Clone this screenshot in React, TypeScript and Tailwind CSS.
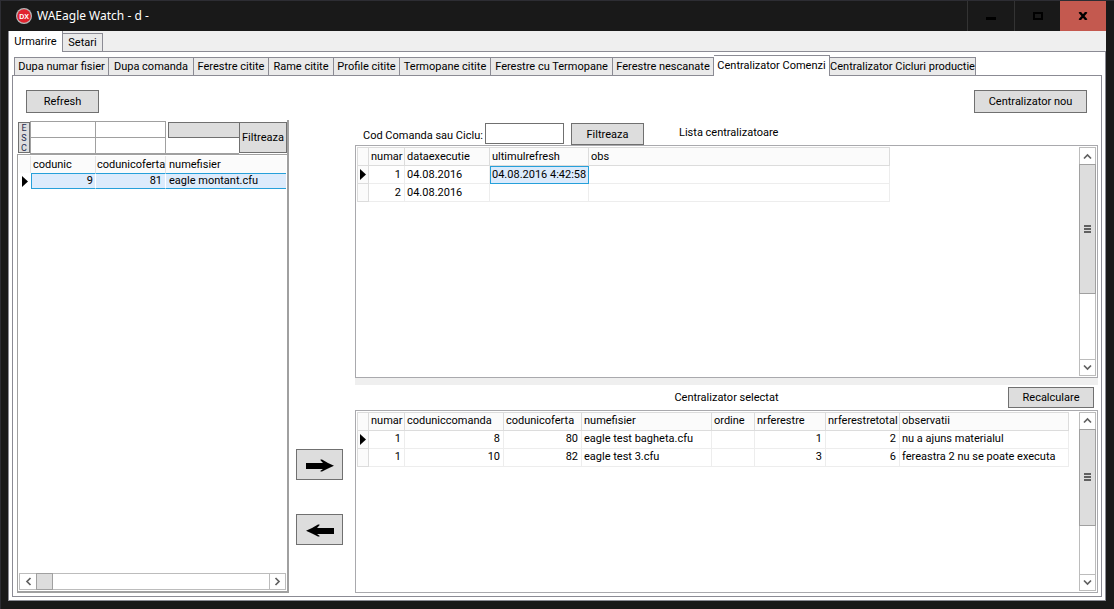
import clsx from "clsx";
import { ReactNode } from "react";

type Column = {
  name: string;
  width: string;
  align?: "right";
};

type GridProps = {
  label: string;
  columns: Column[];
  rows: string[][];
  selectedCell?: number;
};

const mainTabs = ["Urmarire", "Setari"];

const subTabs = [
  { name: "Dupa numar fisier", width: "w-[95px]" },
  { name: "Dupa comanda", width: "w-[85px]" },
  { name: "Ferestre citite", width: "w-[75px]" },
  { name: "Rame citite", width: "w-[65px]" },
  { name: "Profile citite", width: "w-[66px]" },
  { name: "Termopane citite", width: "w-[91px]" },
  { name: "Ferestre cu Termopane", width: "w-[122px]" },
  { name: "Ferestre nescanate", width: "w-[101px]" },
  { name: "Centralizator Comenzi", width: "w-[116px]" },
  { name: "Centralizator Cicluri productie", width: "w-[146px]" },
];

const listColumns: Column[] = [
  { name: "numar", width: "w-[36px]", align: "right" },
  { name: "dataexecutie", width: "w-[85px]" },
  { name: "ultimulrefresh", width: "w-[99px]" },
  { name: "obs", width: "w-[301px]" },
];

const listRows = [
  ["1", "04.08.2016", "04.08.2016 4:42:58", ""],
  ["2", "04.08.2016", "", ""],
];

const selectedColumns: Column[] = [
  { name: "numar", width: "w-[36px]", align: "right" },
  { name: "coduniccomanda", width: "w-[99px]", align: "right" },
  { name: "codunicoferta", width: "w-[78px]", align: "right" },
  { name: "numefisier", width: "w-[130px]" },
  { name: "ordine", width: "w-[43px]", align: "right" },
  { name: "nrferestre", width: "w-[71px]", align: "right" },
  { name: "nrferestretotal", width: "w-[74px]", align: "right" },
  { name: "observatii", width: "w-[169px]" },
];

const selectedRows = [
  ["1", "8", "80", "eagle test bagheta.cfu", "", "1", "2", "nu a ajuns materialul"],
  ["1", "10", "82", "eagle test 3.cfu", "", "3", "6", "fereastra 2 nu se poate executa"],
];

const Button = ({ className, children, label }: { className?: string; children: ReactNode; label?: string }) => (
  <button
    type="button"
    aria-label={label}
    className={clsx(
      "flex shrink-0 items-center justify-center border border-[#707070] bg-[#dddddd] pt-px whitespace-nowrap",
      className
    )}
  >
    {children}
  </button>
);

const Chevron = ({ direction }: { direction: "up" | "down" | "left" | "right" }) => (
  <svg
    width="9"
    height="9"
    viewBox="0 0 9 9"
    fill="none"
    stroke="#606060"
    strokeWidth="1.7"
    className={clsx(
      direction === "down" && "rotate-180",
      direction === "left" && "-rotate-90",
      direction === "right" && "rotate-90"
    )}
  >
    <path d="M1 6.5 4.5 3 8 6.5" />
  </svg>
);

const RowMarker = () => (
  <svg width="6" height="11" viewBox="0 0 6 11" className="mx-auto block">
    <path d="M0 0 6 5.5 0 11Z" fill="#000" />
  </svg>
);

const Arrow = ({ flip }: { flip?: boolean }) => (
  <svg width="28" height="13" viewBox="0 0 28 13" className={clsx(flip && "-scale-x-100")}>
    <path d="M0 4H17L14.5 1.2V.5H16L22 4 28 6.8 22 9.5 16 12.5H14.5V11.8L17 10H0Z" fill="#000" />
  </svg>
);

const VerticalScrollbar = ({ thumb }: { thumb: string }) => (
  <div className="flex w-[17px] shrink-0 flex-col border border-[#bcbcbc] bg-white">
    <button type="button" aria-label="Scroll up" className="flex h-4 items-center justify-center">
      <Chevron direction="up" />
    </button>
    <div className="-mx-px flex-1">
      <div className={clsx("flex flex-col items-center justify-center gap-px border border-[#a0a0a0] bg-[#dddddd]", thumb)}>
        <span className="h-[2px] w-[7px] bg-[#606060]" />
        <span className="h-[2px] w-[7px] bg-[#606060]" />
        <span className="h-[2px] w-[7px] bg-[#606060]" />
      </div>
    </div>
    <button
      type="button"
      aria-label="Scroll down"
      className="flex h-4 items-center justify-center border-t border-[#bcbcbc]"
    >
      <Chevron direction="down" />
    </button>
  </div>
);

const Grid = ({ label, columns, rows, selectedCell }: GridProps) => (
  <table aria-label={label} className="table-fixed border-separate border-spacing-0 border-t border-l border-[#dcdcdc]">
    <thead>
      <tr className="h-[18px] bg-[#fbfbfb]">
        <th aria-label="Row" className="w-[11px] border-r border-b border-[#dcdcdc] p-0" />
        {columns.map((column) => (
          <th
            key={column.name}
            className={clsx(
              "border-r border-b border-[#dcdcdc] p-0 pl-[2px] text-left font-normal whitespace-nowrap",
              column.width
            )}
          >
            {column.name}
          </th>
        ))}
      </tr>
    </thead>
    <tbody>
      {rows.map((row, rowIndex) => (
        <tr key={rowIndex} className="h-[18px]">
          <td className="border-r border-b border-[#dcdcdc] bg-[#fbfbfb] p-0">{rowIndex === 0 && <RowMarker />}</td>
          {row.map((value, index) => (
            <td
              key={index}
              className={clsx(
                "border-r border-b border-[#ededed] p-0 whitespace-nowrap",
                columns[index].align === "right" ? "pr-[3px] text-right" : "pl-[2px]",
                rowIndex === 0 && index === selectedCell && "bg-[#dcebfc] outline outline-1 -outline-offset-1 outline-[#26a0da]"
              )}
            >
              {value}
            </td>
          ))}
        </tr>
      ))}
    </tbody>
  </table>
);

const TitleBar = () => (
  <header className="flex h-[30px] shrink-0 items-stretch text-white">
    <div className="flex flex-1 items-center gap-[5px] pl-2">
      <svg width="16" height="16" viewBox="0 0 16 16">
        <circle cx="8" cy="8" r="8" fill="#b9b9b9" />
        <circle cx="8" cy="8" r="6.8" fill="#e0232e" />
        <text x="8" y="10.5" textAnchor="middle" fontSize="7" fontWeight="bold" fill="#fff" fontFamily="Liberation Sans">
          DX
        </text>
      </svg>
      <h1 className="font-['Noto_Sans',sans-serif] text-[12px]">WAEagle Watch - d -</h1>
    </div>
    <button type="button" aria-label="Minimize" className="flex w-[47px] items-center justify-center border-l border-[#333333]">
      <span className="mt-[4px] h-[3px] w-[10px] bg-black" />
    </button>
    <button type="button" aria-label="Maximize" className="flex w-[46px] items-center justify-center border-l border-[#333333]">
      <span className="h-[8px] w-[10px] border-2 border-black" />
    </button>
    <button type="button" aria-label="Close" className="flex w-[46px] items-center justify-center bg-[#c4594f]">
      <svg width="10" height="8" viewBox="0 0 10 8" stroke="#000" strokeWidth="2.4">
        <path d="M1.5 0 8.5 8M8.5 0 1.5 8" />
      </svg>
    </button>
  </header>
);

const FilesPanel = () => (
  <section className="flex w-[272px] shrink-0 flex-col border-r-2 border-[#a0a0a0] pt-px">
    <div className="flex h-[33px] shrink-0 pl-px">
      <button
        type="button"
        className="my-px w-[12px] border border-[#707070] bg-[#dddddd] text-[9px] leading-[10px] text-[#1d2b4f]"
      >
        E<br />S<br />C
      </button>
      <div className="grid w-[66px] grid-rows-2">
        <input aria-label="codunic from" className="w-full border border-[#a0a0a0]" />
        <input aria-label="codunic to" className="w-full border border-t-0 border-[#a0a0a0]" />
      </div>
      <div className="grid w-[70px] grid-rows-2">
        <input aria-label="codunicoferta from" className="w-full border border-l-0 border-[#a0a0a0]" />
        <input aria-label="codunicoferta to" className="w-full border border-t-0 border-l-0 border-[#a0a0a0]" />
      </div>
      <div className="grid flex-1 grid-rows-2">
        <button type="button" aria-label="numefisier" className="mt-px ml-[2px] border border-r-0 border-[#707070] bg-[#dddddd]" />
        <input aria-label="numefisier filter" className="w-full border-b border-[#a0a0a0]" />
      </div>
      <Button className="my-px w-[48px]">Filtreaza</Button>
    </div>
    <div className="flex flex-1 flex-col justify-between border-t border-b-2 border-l border-[#a0a0a0] p-px">
      <table aria-label="Fisiere" className="w-full table-fixed border-separate border-spacing-0">
        <thead>
          <tr className="h-[17px] bg-[#fbfbfb]">
            <th aria-label="Row" className="w-[12px] border-r border-[#e4e4e4] p-0" />
            <th className="w-[65px] border-r border-[#e4e4e4] p-0 pt-px pl-[2px] text-left font-normal">codunic</th>
            <th className="w-[70px] border-r border-[#e4e4e4] p-0 pt-px pl-px text-left font-normal">codunicoferta</th>
            <th className="p-0 pt-px pl-[3px] text-left font-normal">numefisier</th>
          </tr>
        </thead>
        <tbody>
          <tr className="h-[16px]">
            <td className="p-0">
              <RowMarker />
            </td>
            <td className="border-y border-r border-l border-y-[#26a0da] border-r-white border-l-[#26a0da] bg-[#dcebfc] p-0 pr-[2px] text-right">
              9
            </td>
            <td className="border-y border-r border-y-[#26a0da] border-r-white bg-[#dcebfc] p-0 pr-[3px] text-right">81</td>
            <td className="border-y border-[#26a0da] bg-[#dcebfc] p-0 pl-[3px]">eagle montant.cfu</td>
          </tr>
        </tbody>
      </table>
      <div className="flex h-[17px] border border-[#bcbcbc] bg-white">
        <button type="button" aria-label="Scroll left" className="flex w-4 items-center justify-center">
          <Chevron direction="left" />
        </button>
        <div className="-my-px flex-1">
          <div className="h-[17px] w-[17px] border border-[#a0a0a0] bg-[#dddddd]" />
        </div>
        <button
          type="button"
          aria-label="Scroll right"
          className="flex w-4 items-center justify-center border-l border-[#bcbcbc]"
        >
          <Chevron direction="right" />
        </button>
      </div>
    </div>
  </section>
);

const App = () => {
  return (
    <div className="flex h-screen flex-col border-t border-l border-[#2d2d33] bg-[#191919] pr-[8px] pb-[8px] pl-[7px] font-[Roboto,sans-serif] text-[11px] leading-[14px] text-black">
      <TitleBar />
      <main className="flex min-h-0 flex-1 flex-col border-l border-[#8b8b94] bg-[#efefef]">
        <div role="tablist" className="flex h-[20px] shrink-0 items-end">
          {mainTabs.map((tab, index) => (
            <button
              key={tab}
              type="button"
              role="tab"
              aria-selected={index === 0}
              className={clsx(
                "border-r border-[#8b8b94]",
                index === 0 ? "z-10 -mb-px h-[21px] w-[54px] bg-white" : "h-[18px] w-[40px] border-t bg-[#eaeaea] pt-px"
              )}
            >
              {tab}
            </button>
          ))}
        </div>
        <div className="flex min-h-0 flex-1 flex-col border-t border-r border-b border-[#8b8b94] bg-white px-[3px] pt-[3px] pb-[3px]">
          <div role="tablist" className="flex h-[20px] shrink-0 items-end pl-[2px]">
            {subTabs.map((tab) => (
              <button
                key={tab.name}
                type="button"
                role="tab"
                aria-selected={tab.name === "Centralizator Comenzi"}
                className={clsx(
                  "shrink-0 border-t border-r border-[#8b8b94] whitespace-nowrap first:border-l",
                  tab.name === "Centralizator Comenzi"
                    ? "z-10 -mb-px h-[21px] bg-white pb-px"
                    : "h-[18px] bg-[#eaeaea] pt-px",
                  tab.width
                )}
              >
                {tab.name}
              </button>
            ))}
          </div>
          <div className="flex min-h-0 flex-1 flex-col border border-[#8b8b94] pt-[14px] pr-[3px] pb-[3px] pl-[4px]">
            <div className="flex shrink-0 justify-between pr-[11px] pl-[9px]">
              <Button className="h-[23px] w-[73px]">Refresh</Button>
              <Button className="h-[23px] w-[113px]">Centralizator nou</Button>
            </div>
            <div className="flex min-h-0 flex-1 pt-[7px]">
              <FilesPanel />
              <div className="flex w-[66px] shrink-0 flex-col items-center justify-end gap-[34px] pr-[5px] pb-[48px]">
                <Button label="Adauga" className="h-[31px] w-[47px]">
                  <Arrow />
                </Button>
                <Button label="Elimina" className="h-[31px] w-[47px]">
                  <Arrow flip />
                </Button>
              </div>
              <div className="flex min-w-0 flex-1 flex-col">
                <div className="flex h-[25px] shrink-0 items-start pt-[3px] pl-[8px]">
                  <label htmlFor="cod" className="w-[122px] pt-[6px] whitespace-nowrap">
                    Cod Comanda sau Ciclu:
                  </label>
                  <input id="cod" className="h-[21px] w-[79px] border border-[#707070] bg-white" />
                  <Button className="ml-[7px] h-[22px] w-[73px]">Filtreaza</Button>
                  <h2 className="ml-[35px] pt-[3px]">Lista centralizatoare</h2>
                </div>
                <div className="flex min-h-0 flex-[233] items-stretch justify-between border border-[#a9a9ad] p-px">
                  <div>
                    <Grid label="Lista centralizatoare" columns={listColumns} rows={listRows} selectedCell={2} />
                  </div>
                  <VerticalScrollbar thumb="h-[130px]" />
                </div>
                <div className="h-[7px] shrink-0 bg-[#efefef]" />
                <div className="flex h-[25px] shrink-0 items-center justify-between pr-[4px]">
                  <h2 className="flex-1 pt-px pl-[90px] text-center">Centralizator selectat</h2>
                  <Button className="h-[21px] w-[86px]">Recalculare</Button>
                </div>
                <div className="flex min-h-0 flex-[183] items-stretch justify-between border border-[#a9a9ad] p-px">
                  <div>
                    <Grid label="Centralizator selectat" columns={selectedColumns} rows={selectedRows} />
                  </div>
                  <VerticalScrollbar thumb="h-[97px]" />
                </div>
              </div>
            </div>
          </div>
        </div>
      </main>
    </div>
  );
};

export default App;
